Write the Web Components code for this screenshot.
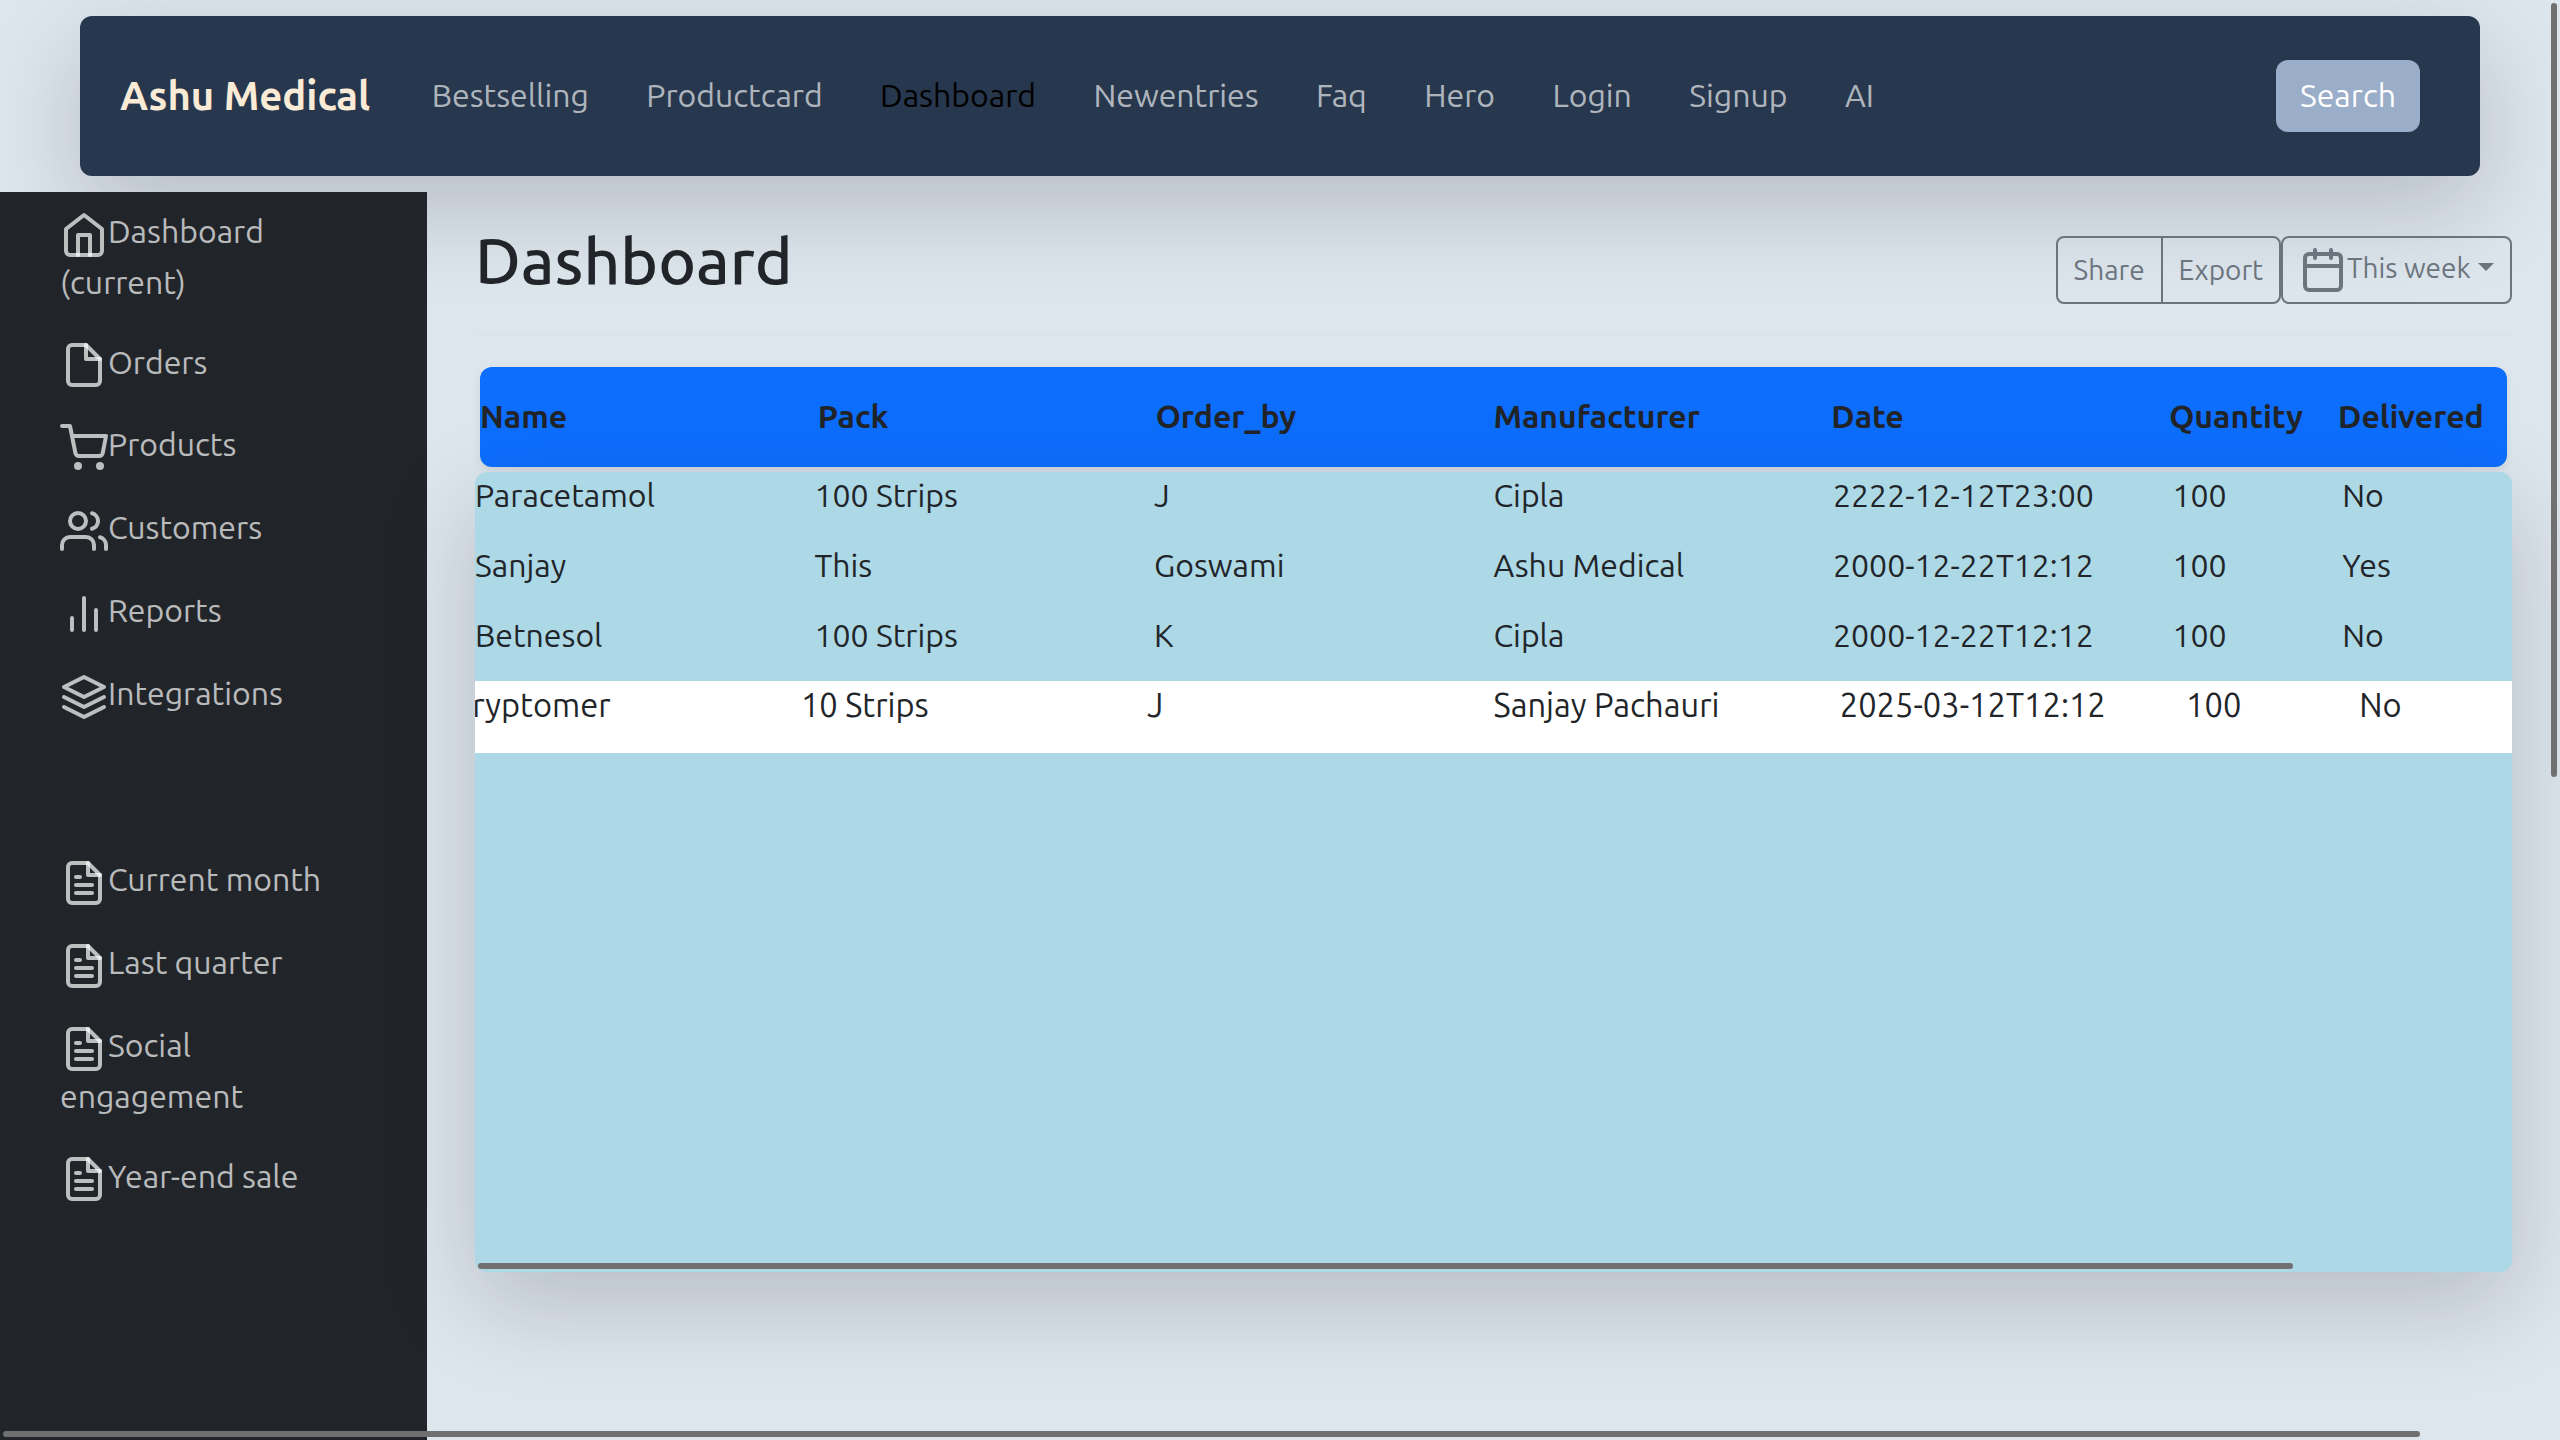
<!DOCTYPE html>
<html lang="en">
<head>
<meta charset="utf-8">
<title>Ashu Medical - Dashboard</title>
<style>
html, body { margin: 0; height: 1440px; overflow: hidden; }
body { background: #dde5ed; color: #212529; font: 400 32px/48px Ubuntu, "Open Sans", "Noto Sans", sans-serif; }
</style>
</head>
<body>
<medical-app></medical-app>
<script>
const define = (name, html, connected) => {
  const template = document.createElement('template');
  template.innerHTML = html;
  customElements.define(name, class extends HTMLElement {
    constructor() {
      super();
      this.attachShadow({ mode: 'open' }).append(template.content.cloneNode(true));
    }
    connectedCallback() { if (connected) connected.call(this, this.shadowRoot); }
  });
};

const ICONS = {
  home: '<path d="M3 9l9-7 9 7v11a2 2 0 0 1-2 2H5a2 2 0 0 1-2-2z"/><polyline points="9 22 9 12 15 12 15 22"/>',
  file: '<path d="M13 2H6a2 2 0 0 0-2 2v16a2 2 0 0 0 2 2h12a2 2 0 0 0 2-2V9z"/><polyline points="13 2 13 9 20 9"/>',
  cart: '<circle cx="9" cy="21" r="1"/><circle cx="20" cy="21" r="1"/><path d="M1 1h4l2.68 13.39a2 2 0 0 0 2 1.61h9.72a2 2 0 0 0 2-1.61L23 6H6"/>',
  users: '<path d="M17 21v-2a4 4 0 0 0-4-4H5a4 4 0 0 0-4 4v2"/><circle cx="9" cy="7" r="4"/><path d="M23 21v-2a4 4 0 0 0-3-3.87"/><path d="M16 3.13a4 4 0 0 1 0 7.75"/>',
  bars: '<line x1="18" y1="20" x2="18" y2="10"/><line x1="12" y1="20" x2="12" y2="4"/><line x1="6" y1="20" x2="6" y2="14"/>',
  layers: '<polygon points="12 2 2 7 12 12 22 7 12 2"/><polyline points="2 17 12 22 22 17"/><polyline points="2 12 12 17 22 12"/>',
  text: '<path d="M14 2H6a2 2 0 0 0-2 2v16a2 2 0 0 0 2 2h12a2 2 0 0 0 2-2V8z"/><polyline points="14 2 14 8 20 8"/><line x1="16" y1="13" x2="8" y2="13"/><line x1="16" y1="17" x2="8" y2="17"/><polyline points="10 9 9 9 8 9"/>',
  calendar: '<rect x="3" y="4" width="18" height="18" rx="2" ry="2"/><line x1="16" y1="2" x2="16" y2="6"/><line x1="8" y1="2" x2="8" y2="6"/><line x1="3" y1="10" x2="21" y2="10"/>'
};
define('line-icon', `<style>
:host { display: block; width: 48px; height: 48px; flex: none; }
svg { display: block; fill: none; stroke: currentColor; stroke-width: 2; stroke-linecap: round; stroke-linejoin: round; }
</style><svg width="48" height="48" viewBox="0 0 24 24"></svg>`, function (root) {
  root.querySelector('svg').innerHTML = ICONS[this.getAttribute('name')];
});

define('top-nav', `<style>
:host { display: flex; align-items: center; box-sizing: border-box; height: 160px; margin: 16px 80px; padding: 0 60px 0 40px;
  background: #27374d; border-radius: 12px; box-shadow: 0 32px 96px rgba(0,0,0,.175); white-space: nowrap; }
.brand { color: antiquewhite; font-size: 40px; font-weight: 700; width: 311.7px; }
nav { display: flex; gap: 57.4px; flex: 1; color: rgba(255,255,255,.65); margin-top: -2px; }
.active { color: #000; }
button { all: unset; box-sizing: border-box; width: 144px; height: 72px; padding-bottom: 2px; line-height: 68px; text-align: center; border-radius: 12px; background: #9aadc9; color: #fff; }
</style>
<span class="brand">Ashu Medical</span>
<nav><span>Bestselling</span><span>Productcard</span><span class="active">Dashboard</span><span>Newentries</span><span>Faq</span><span>Hero</span><span>Login</span><span>Signup</span><span>AI</span></nav>
<button>Search</button>`);

define('side-link', `<style>
:host { display: block; padding-bottom: 35px; white-space: nowrap; }
.head { display: flex; height: 48px; line-height: 40px; }
:host([low]) .head { line-height: 42px; }
.tail { line-height: 46px; height: 47px; }
</style><div class="head"><span></span></div>`, function (root) {
  const head = root.querySelector('.head');
  const icon = document.createElement('line-icon');
  icon.setAttribute('name', this.getAttribute('icon'));
  head.prepend(icon);
  head.lastElementChild.textContent = this.getAttribute('label');
  if (this.hasAttribute('tail')) {
    const tail = document.createElement('div');
    tail.className = 'tail';
    tail.textContent = this.getAttribute('tail');
    root.append(tail);
  }
});

define('side-bar', `<style>
:host { display: block; box-sizing: border-box; width: 427px; height: 1248px; padding: 19px 0 0 60px; background: #212529; color: rgba(255,255,255,.7); flex: none; }
ul { display: block; margin: 0; padding: 0; }
ul + ul { margin-top: 103px; }
</style>
<ul>
<side-link icon="home" label="Dashboard" tail="(current)"></side-link>
<side-link icon="file" label="Orders" low></side-link>
<side-link icon="cart" label="Products"></side-link>
<side-link icon="users" label="Customers"></side-link>
<side-link icon="bars" label="Reports"></side-link>
<side-link icon="layers" label="Integrations"></side-link>
</ul>
<ul>
<side-link icon="text" label="Current month"></side-link>
<side-link icon="text" label="Last quarter"></side-link>
<side-link icon="text" label="Social" tail="engagement"></side-link>
<side-link icon="text" label="Year-end sale" low></side-link>
</ul>`);

define('page-head', `<style>
:host { display: flex; box-sizing: border-box; height: 143px; border-bottom: 2px solid #dee2e6; justify-content: space-between; padding-top: 20px; white-space: nowrap; }
h1 { margin: 0; font-size: 64px; font-weight: 500; line-height: 96px; }
.tools { display: flex; margin-top: 24px; height: 68px; font-size: 28px; color: #6c757d; }
.btn { box-sizing: border-box; display: flex; border: 2px solid #6c757d; line-height: 64px; height: 68px; }
.share { width: 107px; padding-left: 15.5px; border-radius: 8px 0 0 8px; }
.export { width: 120px; padding-left: 15.5px; margin-left: -2px; border-radius: 0 8px 8px 0; }
.week { width: 231px; padding-left: 16px; border-radius: 8px; line-height: 60px; }
line-icon { margin-top: 8px; }
i { width: 0; height: 0; margin: 25px 0 0 7.5px; border: 8.4px solid transparent; border-top-color: currentColor; border-bottom: 0; }
</style>
<h1>Dashboard</h1>
<div class="tools">
<div class="btn share">Share</div>
<div class="btn export">Export</div>
<div class="btn week"><line-icon name="calendar"></line-icon><span>This week</span><i></i></div>
</div>`);

define('data-row', `<style>
:host { display: grid; grid-template-columns: repeat(5, 2fr) 1fr 1fr; height: 70px; white-space: nowrap; }
span { min-width: 0; }
span:first-of-type { margin-left: var(--lead, 0); }
</style>`, function (root) {
  for (const cell of this.getAttribute('cells').split(';')) {
    const el = document.createElement('span');
    el.textContent = cell;
    root.append(el);
  }
});

define('order-table', `<style>
:host { display: block; }
.header { height: 100px; margin: 32px 5px 5px; background: #0d6efd; border-radius: 12px; box-shadow: 0 4px 8px rgba(0,0,0,.075); font-weight: 700; line-height: 99px; }
.body { position: relative; height: 800px; background: #add8e6; border-radius: 12px; overflow: hidden; box-shadow: 0 32px 96px rgba(0,0,0,.175); line-height: 46px; }
.hover { background: #fff; transform: scale(1.02, 1.0286); --lead: -2.4px; }
.thumb { position: absolute; left: 3px; bottom: 3px; width: 1815px; height: 6px; border-radius: 3px; background: #707070; }
</style>
<data-row class="header" cells="Name;Pack;Order_by;Manufacturer;Date;Quantity;Delivered"></data-row>
<div class="body">
<data-row cells="Paracetamol;100 Strips;J;Cipla;2222-12-12T23:00;100;No"></data-row>
<data-row cells="Sanjay;This;Goswami;Ashu Medical;2000-12-22T12:12;100;Yes"></data-row>
<data-row cells="Betnesol;100 Strips;K;Cipla;2000-12-22T12:12;100;No"></data-row>
<data-row class="hover" cells="Cryptomer;10 Strips;J;Sanjay Pachauri;2025-03-12T12:12;100;No"></data-row>
<div class="thumb"></div>
</div>`);

define('medical-app', `<style>
:host { display: block; position: relative; width: 2560px; height: 1440px; overflow: hidden; }
:host::before { content: ""; display: table; }
.cols { display: flex; }
main { width: 2037px; margin-left: 48px; }
.v, .h { position: absolute; background: #707070; border-radius: 3px; }
.v { left: 2551px; top: 3px; width: 6px; height: 774px; }
.h { left: 3px; top: 1431px; width: 2417px; height: 6px; }
</style>
<top-nav></top-nav>
<div class="cols">
<side-bar></side-bar>
<main><page-head></page-head><order-table></order-table></main>
</div>
<div class="v"></div><div class="h"></div>`);
</script>
</body>
</html>
